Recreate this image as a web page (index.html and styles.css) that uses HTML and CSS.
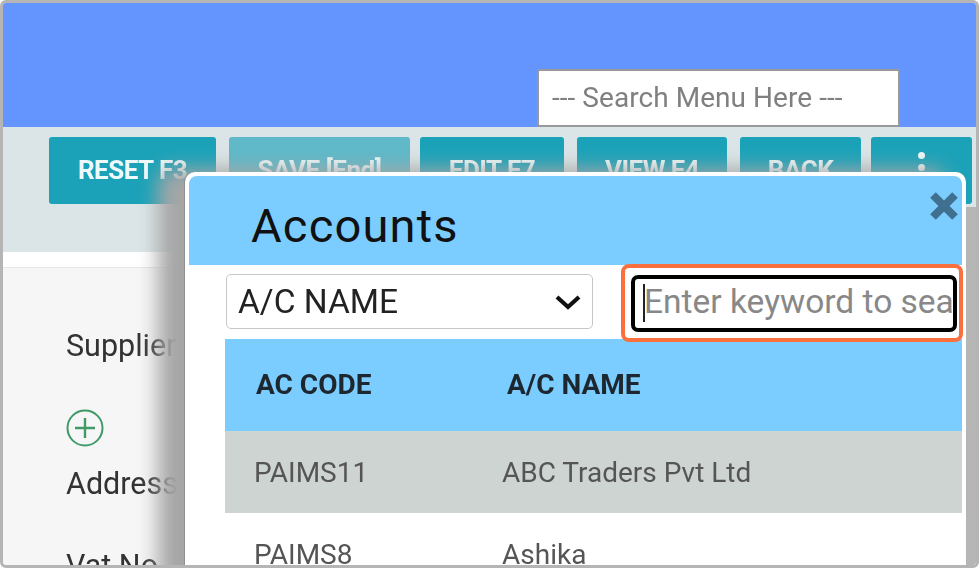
FILE: index.html
```html
<!DOCTYPE html>
<html lang="en">
<head>
<meta charset="utf-8">
<title>Accounts</title>
<link rel="stylesheet" href="styles.css">
</head>
<body>
<div class="frame">
  <header class="topbar">
    <div class="menu-search">--- Search Menu Here ---</div>
  </header>
  <div class="toolbar">
    <button class="btn btn-reset">RESET F3</button>
    <button class="btn btn-save">SAVE [End]</button>
    <button class="btn btn-edit">EDIT F7</button>
    <button class="btn btn-view">VIEW F4</button>
    <button class="btn btn-back">BACK</button>
    <button class="btn btn-more"><span class="dot"></span><span class="dot"></span><span class="dot"></span></button>
  </div>
  <div class="gap-white"></div>
  <main class="form">
    <div class="field-label">Supplier</div>
    <svg class="plus" viewBox="0 0 38 38" aria-hidden="true"><circle cx="19" cy="19" r="17.5" fill="none" stroke="#3f9a68" stroke-width="2"/><path d="M19 9v20M9 19h20" fill="none" stroke="#3f9a68" stroke-width="2.4"/></svg>
    <div class="field-label address">Address</div>
    <div class="field-label vat">Vat No</div>
  </main>
  <div class="gutter"></div>
  <section class="modal">
    <div class="modal-head">
      <h2 class="modal-title">Accounts</h2>
      <svg class="close" viewBox="0 0 32 32" aria-hidden="true"><path d="M5 5 27 27M27 5 5 27" fill="none" stroke="#40708f" stroke-width="8"/></svg>
    </div>
    <div class="filters">
      <div class="select">
        <span>A/C NAME</span>
        <svg class="chev" viewBox="0 0 28 18" aria-hidden="true"><path d="M3 4 14 14 25 4" fill="none" stroke="#111" stroke-width="4.2"/></svg>
      </div>
      <div class="highlight">
        <div class="keyword"><input class="kw-input" type="text" placeholder="Enter keyword to search" readonly><span class="caret"></span></div>
      </div>
    </div>
    <div class="table">
      <div class="row row-head"><div class="c1">AC CODE</div><div class="c2">A/C NAME</div></div>
      <div class="row row-alt"><div class="c1">PAIMS11</div><div class="c2">ABC Traders Pvt Ltd</div></div>
      <div class="row"><div class="c1">PAIMS8</div><div class="c2">Ashika</div></div>
    </div>
  </section>
</div>
</body>
</html>
```
FILE: styles.css
```css
* { box-sizing: border-box; }
html, body { margin: 0; height: 100%; background: #fff; }
body { font-family: Roboto, "Liberation Sans", sans-serif; overflow: hidden; }
.frame { position: relative; width: 979px; height: 568px; border: 3px solid #b5b5b5; overflow: hidden; border-radius: 6px; background: #f6f6f6; display: flex; flex-direction: column; }
.frame > * { filter: blur(.7px); }
.topbar { height: 124px; flex: none; background: #6495ff; display: flex; align-items: flex-end; padding-left: 534px; }
.menu-search { width: 363px; height: 58px; background: #fff; border: 2px solid #999; border-radius: 2px; color: #808080; font-size: 28px; letter-spacing: .05px; line-height: 54px; padding-left: 13px; white-space: nowrap; }
.toolbar { height: 125px; flex: none; background: #dbe5e7; display: flex; align-items: flex-start; padding: 10px 0 0 46px; }
.btn { height: 67px; border: 0; border-radius: 3px; background: #1ba2b8; color: #eef9fa; font: 700 26px/1 Roboto, sans-serif; letter-spacing: -.5px; padding: 0 0 2px; margin: 0; }
.btn-reset { width: 167px; }
.btn-save { width: 181px; margin-left: 13px; background: #5fb9c8; }
.btn-edit { width: 144px; margin-left: 10px; }
.btn-view { width: 150px; margin-left: 13px; }
.btn-back { width: 121px; margin-left: 13px; }
.btn-more { width: 101px; margin-left: 10px; display: flex; flex-direction: column; align-items: center; gap: 5px; padding: 15px 0 0; }
.dot { width: 7px; height: 7px; border-radius: 50%; background: #eef9fa; flex: none; }
.gap-white { height: 16px; flex: none; background: #fff; border-bottom: 1px solid #e6e6e6; }
.form { flex: 1; padding: 60px 0 0 63px; color: #333; }
.field-label { font-size: 30.5px; line-height: 36px; white-space: nowrap; }
.plus { display: block; width: 38px; height: 38px; margin-top: 45px; }
.address { margin-top: 19px; }
.vat { margin-top: 46px; }
.gutter { position: absolute; right: 0; top: 204px; bottom: 0; width: 14px; background: #b6b6b6; }
.modal { position: absolute; left: 182px; top: 169px; width: 781px; height: 420px; background: #fff; border-radius: 10px 10px 0 0; border: 4px solid #fff; border-bottom: 0; box-shadow: -1px 0 0 0 #8f8f8f, -24px 0 20px 3px #a6a6a6; }
.modal-head { position: relative; height: 89px; background: #7ccdff; border-radius: 8px 8px 0 0; }
.modal-title { margin: 0; padding: 25px 0 0 62px; font-size: 47px; line-height: 50px; font-weight: 400; color: #111; letter-spacing: 1.2px; }
.close { position: absolute; right: 2px; top: 14px; width: 32px; height: 32px; }
.filters { display: flex; height: 74px; padding: 9px 0 0 37px; align-items: flex-start; }
.select { width: 367px; height: 55px; border: 1px solid #c6c6c6; border-radius: 5px; display: flex; align-items: center; justify-content: space-between; padding: 0 10px 0 11px; font-size: 33.5px; color: #222; flex: none; }
.chev { width: 28px; height: 18px; }
.highlight { width: 342px; height: 78px; margin: -10px 0 0 28px; border: 4px solid #f9703e; border-radius: 8px; padding: 7px 2px 0 6px; flex: none; position: relative; z-index: 1; background: #fff; }
.keyword { position: relative; height: 57px; border: 4px solid #000; border-radius: 7px; background: #fff; overflow: hidden; }
.kw-input { display: block; width: 100%; height: 100%; border: 0; outline: 0; background: transparent; padding: 0 0 4px 9px; font: 400 33.5px Roboto, sans-serif; color: #888; }
.kw-input::placeholder { color: #888; opacity: 1; }
.caret { position: absolute; left: 8px; top: 5px; width: 2px; height: 38px; background: #222; }
.table { margin-left: 36px; }
.row { display: flex; height: 82px; align-items: center; font-size: 28px; color: #555; }
.row-head { height: 92px; background: #7ccdff; font-weight: 700; color: #1d2730; padding-bottom: 2px; }
.row-alt { background: #ced4d2; }
.c1 { width: 277px; padding-left: 29px; flex: none; }
.c2 { flex: 1; }
.row-head .c1 { padding-left: 31px; }
.row-head .c2 { padding-left: 5px; }
```
